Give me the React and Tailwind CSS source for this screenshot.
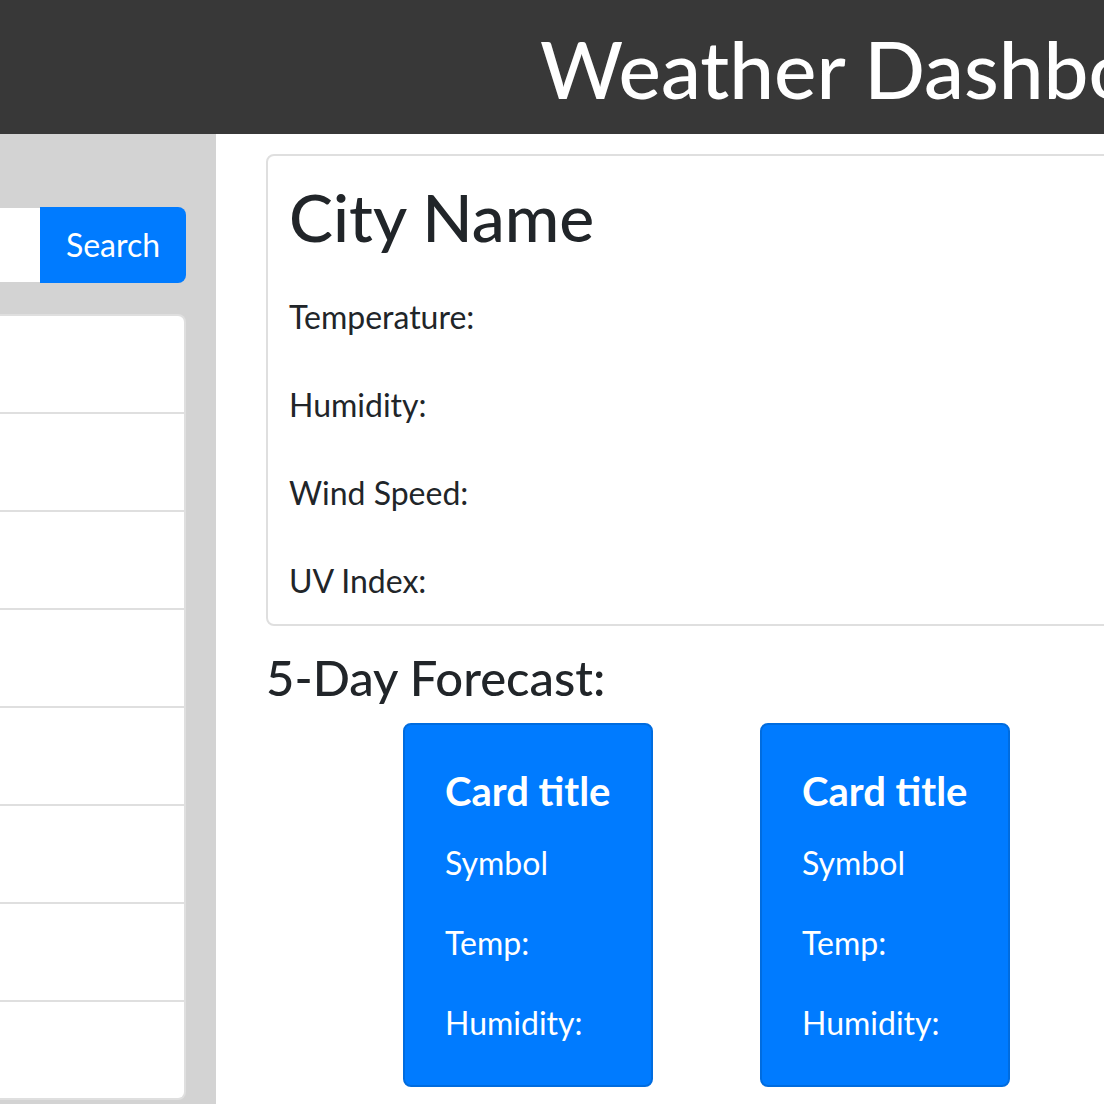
import React from 'react';

const cities = Array.from({ length: 8 });
const forecast = ['Card title', 'Card title'];

export default function App() {
  return (
    <div className="w-[1104px] h-[1104px] overflow-hidden bg-white font-['Lato',sans-serif] text-[#212529]">
      {/* Header */}
      <header className="h-[134px] bg-[#383838] pt-[20px] pl-[540px] overflow-hidden">
        <h1 className="text-[80px] leading-[96px] font-medium text-white whitespace-nowrap">Weather Dashboard</h1>
      </header>

      <div className="flex h-[970px]">
        {/* Sidebar */}
        <aside className="w-[216px] shrink-0 bg-[#d3d3d3] pt-[73px]">
          <div className="flex items-center h-[76px]">
            <div className="w-[40px] h-[74px] bg-white" />
            <button className="w-[146px] h-[76px] bg-[#007bff] rounded-r-[8px] text-white text-[32px] leading-[48px]">
              Search
            </button>
          </div>
          <ul className="mt-[31px] w-[186px] bg-white border-2 border-l-0 border-[#dfdfdf] rounded-r-[8px]">
            {cities.map((_, i) => (
              <li
                key={i}
                className={`h-[96px] ${i < cities.length - 1 ? 'border-b-2 border-[#dfdfdf]' : ''} box-content`}
              />
            ))}
          </ul>
        </aside>

        {/* Main */}
        <main className="flex-1 pl-[50px] pt-[20px] overflow-hidden">
          <section className="w-[900px] border-2 border-[#dfdfdf] rounded-[8px] pl-[21px] pt-[21px] pb-[19px]">
            <h2 className="text-[66px] leading-[80px] font-medium mb-[36px]">City Name</h2>
            <div className="flex flex-col gap-[40px] text-[32px] leading-[48px]">
              <p>Temperature:</p>
              <p>Humidity:</p>
              <p>Wind Speed:</p>
              <p>UV Index:</p>
            </div>
          </section>

          <h3 className="mt-[21px] text-[49px] leading-[60px] font-medium">5-Day Forecast:</h3>

          <div className="flex gap-[107px] ml-[137px] mt-[16px]">
            {forecast.map((title, i) => (
              <div
                key={i}
                className="w-[250px] h-[364px] shrink-0 bg-[#007bff] border-2 border-[#006cdf] rounded-[8px] pl-[40px] pt-[42px] text-white"
              >
                <h5 className="text-[40px] leading-[48px] font-bold mb-[24px]">{title}</h5>
                <div className="flex flex-col gap-[32px] text-[32px] leading-[48px]">
                  <p>Symbol</p>
                  <p>Temp:</p>
                  <p>Humidity:</p>
                </div>
              </div>
            ))}
          </div>
        </main>
      </div>
    </div>
  );
}
